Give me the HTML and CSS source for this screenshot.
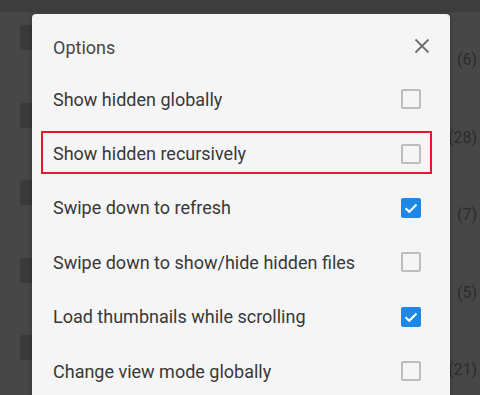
FILE: index.html
```html
<!DOCTYPE html>
<html>
<head>
<meta charset="utf-8">
<link rel="stylesheet" href="styles.css">
</head>
<body>
<div class="screen">
  <div class="statusbar"></div>
  <div class="bglist">
    <div class="bgrow"><span class="bgicon"></span><span class="bgcount">(6)</span></div>
    <div class="bgrow"><span class="bgicon"></span><span class="bgcount">(28)</span></div>
    <div class="bgrow"><span class="bgicon"></span><span class="bgcount">(7)</span></div>
    <div class="bgrow"><span class="bgicon"></span><span class="bgcount">(5)</span></div>
    <div class="bgrow"><span class="bgicon"></span><span class="bgcount">(21)</span></div>
  </div>

  <div class="dialog">
    <div class="header">
      <span class="title">Options</span>
      <svg class="close" width="16" height="16" viewBox="0 0 16 16"><path d="M1.5 1.5 L14.5 14.5 M14.5 1.5 L1.5 14.5" stroke="#6e6e6e" stroke-width="1.8" fill="none"/></svg>
    </div>
    <div class="row"><span class="label">Show hidden globally</span><span class="cb"></span></div>
    <div class="row"><span class="label">Show hidden recursively</span><span class="cb"></span><span class="highlight"></span></div>
    <div class="row"><span class="label">Swipe down to refresh</span><span class="cb checked"><svg width="20" height="20" viewBox="0 0 20 20"><path d="M4.5 10.2 L8.3 13.8 L15.5 6.5" stroke="#fff" stroke-width="2" fill="none"/></svg></span></div>
    <div class="row"><span class="label">Swipe down to show/hide hidden files</span><span class="cb"></span></div>
    <div class="row"><span class="label">Load thumbnails while scrolling</span><span class="cb checked"><svg width="20" height="20" viewBox="0 0 20 20"><path d="M4.5 10.2 L8.3 13.8 L15.5 6.5" stroke="#fff" stroke-width="2" fill="none"/></svg></span></div>
    <div class="row"><span class="label">Change view mode globally</span><span class="cb"></span></div>
  </div>
</div>
</body>
</html>
```

FILE: styles.css
```css
* { box-sizing: border-box; }
html, body { margin: 0; padding: 0; }
body {
  width: 480px;
  height: 395px;
  overflow: hidden;
  background: #474747;
  font-family: Roboto, "Noto Sans", sans-serif;
}
.screen {
  position: relative;
  width: 480px;
  height: 395px;
  overflow: hidden;
}
.statusbar {
  height: 12px;
  background: #3d3d3d;
}
.bglist {
  padding-top: 13px;
  display: flex;
  flex-direction: column;
}
.bgrow {
  height: 77.5px;
  display: flex;
  justify-content: space-between;
  align-items: flex-start;
  padding: 0 3px 0 20px;
}
.bgicon {
  width: 26px;
  height: 25px;
  border-radius: 3px;
  background: #3a3a3a;
}
.bgcount {
  margin-top: 25px;
  font-size: 16px;
  color: #2c2c2c;
}
.dialog {
  position: absolute;
  left: 32px;
  top: 14px;
  width: 418px;
  height: 420px;
  background: #f5f5f5;
  border-radius: 4px;
  box-shadow: 0 0 4px rgba(0,0,0,0.35);
}
.header {
  height: 58px;
  padding: 8px 20px 0 21px;
  display: flex;
  align-items: center;
  justify-content: space-between;
}
.title {
  font-size: 18px;
  color: #464646;
}
.close {
  display: block;
  margin-top: -2px;
}
.row {
  position: relative;
  height: 54.4px;
  display: flex;
  align-items: center;
  justify-content: space-between;
  padding: 0 29px 0 21px;
}
.label {
  font-size: 18px;
  color: #383838;
}
.cb {
  width: 20px;
  height: 20px;
  border: 2px solid #bdbdbd;
  border-radius: 2px;
  display: flex;
  align-items: center;
  justify-content: center;
}
.cb.checked {
  border: none;
  background: #1f87e6;
}
.cb svg { display: block; }
.highlight {
  position: absolute;
  left: 9px;
  right: 18px;
  top: 5px;
  height: 43px;
  border: 2px solid #ea1330;
}
```
